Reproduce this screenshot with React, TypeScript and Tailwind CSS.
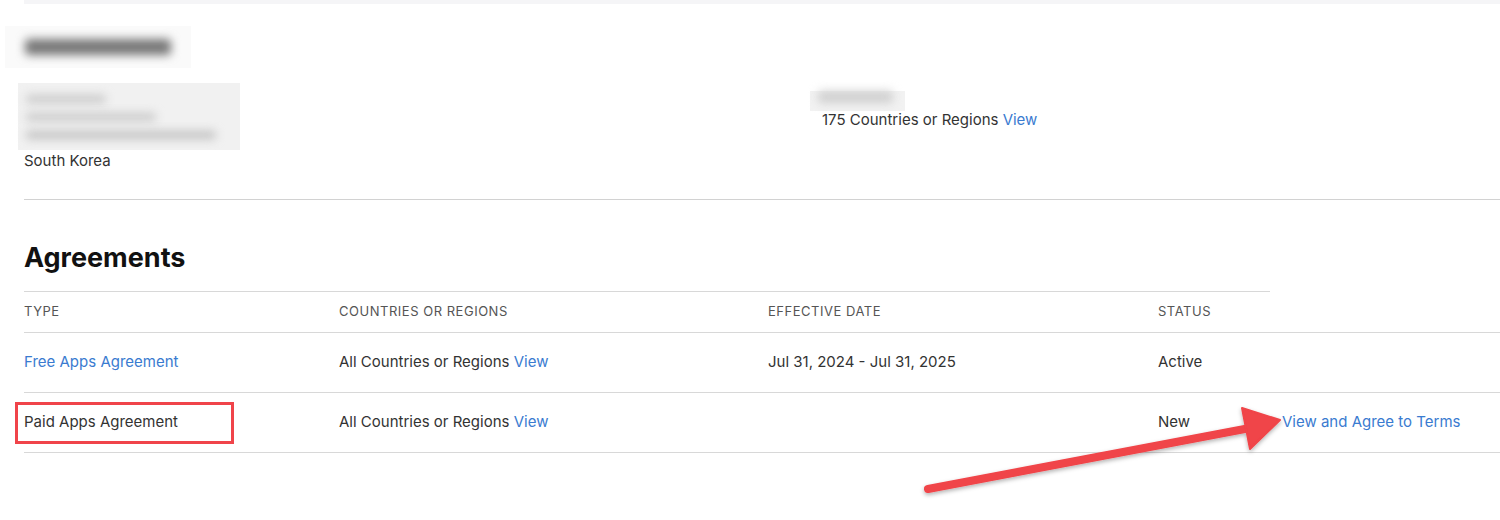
const font = { fontFamily: "Inter, 'Liberation Sans', sans-serif" };

function Blur({ className }: { className: string }) {
  return <div className={`rounded-sm bg-[#8a8a8a] blur-[5px] ${className}`} />;
}

function Row({
  type,
  typeLink,
  boxed,
  date,
  status,
  action,
}: {
  type: string;
  typeLink?: boolean;
  boxed?: boolean;
  date: string;
  status: string;
  action?: string;
}) {
  return (
    <div className="flex h-[60px] items-center border-b border-[#d8d8d8] text-[15px] text-[#333]">
      <div className="w-[315px]">
        <span
          className={
            boxed
              ? "-ml-[9px] inline-flex h-[42px] w-[219px] items-center border-[3px] border-[#f0444a] pl-[6px]"
              : typeLink
                ? "text-[#3a7bd0]"
                : ""
          }
        >
          {type}
        </span>
      </div>
      <div className="w-[429px]">
        All Countries or Regions <span className="text-[#3a7bd0]">View</span>
      </div>
      <div className="w-[390px]">{date}</div>
      <div className="w-[124px]">{status}</div>
      <div className="text-[#3a7bd0]">{action}</div>
    </div>
  );
}

export default function App() {
  return (
    <div className="relative h-[520px] w-[1500px] overflow-hidden bg-white" style={font}>
      <div className="ml-6 h-1 bg-[#f5f5f7]" />

      <div className="ml-6 flex border-b border-[#d2d2d2] pb-[29px]">
        <div className="w-[798px]">
          <div className="-ml-[19px] mt-[22px] flex h-[42px] w-[186px] items-center bg-[#fafafa] px-5">
            <Blur className="h-[16px] w-[160px] bg-[#777]" />
          </div>
          <div className="-ml-[6px] mt-[15px] flex h-[67px] w-[222px] flex-col justify-center gap-[10px] bg-[#f1f1f1] px-2">
            <Blur className="h-[8px] w-[80px] bg-[#c8c8c8]" />
            <Blur className="h-[8px] w-[130px] bg-[#c8c8c8]" />
            <Blur className="h-[8px] w-[190px] bg-[#c0c0c0]" />
          </div>
          <div className="mt-[2px] text-[15px] leading-[18px] text-[#333]">South Korea</div>
        </div>
        <div className="pt-[83px]">
          <div className="-ml-3 h-[20px] w-[95px] bg-[#f2f2f2]">
            <Blur className="ml-2 mt-[4px] h-[12px] w-[75px] bg-[#cfcfcf]" />
          </div>
          <div className="-mt-[1px] text-[15px] leading-[20px] text-[#333]">
            175 Countries or Regions <span className="text-[#3a7bd0]">View</span>
          </div>
        </div>
      </div>

      <div className="ml-6">
        <h2 className="mt-[40px] text-[27px] font-bold leading-[36px] text-[#111]">Agreements</h2>
        <div className="mt-[15px] h-px w-[1246px] bg-[#d8d8d8]" />
        <div className="flex h-[41px] items-center border-b border-[#d8d8d8] text-[13px] tracking-[0.04em] text-[#555]">
          <div className="w-[315px]">TYPE</div>
          <div className="w-[429px]">COUNTRIES OR REGIONS</div>
          <div className="w-[390px]">EFFECTIVE DATE</div>
          <div>STATUS</div>
        </div>
        <Row type="Free Apps Agreement" typeLink date="Jul 31, 2024 - Jul 31, 2025" status="Active" />
        <Row type="Paid Apps Agreement" boxed date="" status="New" action="View and Agree to Terms" />
      </div>

      <svg className="absolute left-0 top-0" width="1500" height="520" viewBox="0 0 1500 520">
        <defs>
          <filter id="sh" x="-10%" y="-50%" width="120%" height="200%">
            <feDropShadow dx="0" dy="2" stdDeviation="2" floodColor="#000" floodOpacity="0.3" />
          </filter>
        </defs>
        <g filter="url(#sh)" fill="#f04448" stroke="#f04448" strokeLinejoin="round" strokeLinecap="round">
          <line x1="928" y1="489" x2="1250" y2="428" strokeWidth="8" />
          <polygon points="1280,420 1242,408 1250,449" strokeWidth="2" />
        </g>
      </svg>
    </div>
  );
}
